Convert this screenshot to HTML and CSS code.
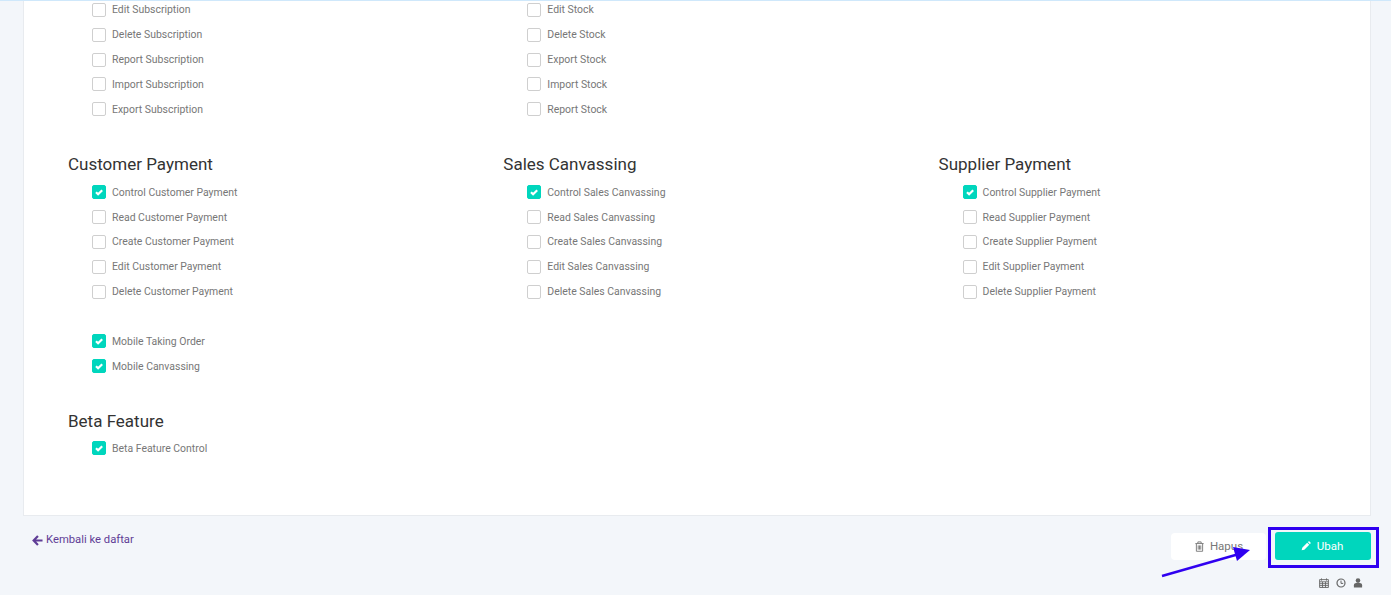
FILE: index.html
```html
<!DOCTYPE html>
<html lang="id">
<head>
<meta charset="utf-8">
<title>Ubah Peran</title>
<link rel="stylesheet" href="styles.css">
</head>
<body>
<div class="topline"></div>
<main class="card">
  <div class="grid first">
    <ul class="perms">
      <li class="perm"><span class="box"></span>Edit Subscription</li>
      <li class="perm"><span class="box"></span>Delete Subscription</li>
      <li class="perm"><span class="box"></span>Report Subscription</li>
      <li class="perm"><span class="box"></span>Import Subscription</li>
      <li class="perm"><span class="box"></span>Export Subscription</li>
    </ul>
    <ul class="perms">
      <li class="perm"><span class="box"></span>Edit Stock</li>
      <li class="perm"><span class="box"></span>Delete Stock</li>
      <li class="perm"><span class="box"></span>Export Stock</li>
      <li class="perm"><span class="box"></span>Import Stock</li>
      <li class="perm"><span class="box"></span>Report Stock</li>
    </ul>
  </div>
  <div class="grid second">
    <section>
      <h3 class="title">Customer Payment</h3>
      <ul class="perms">
        <li class="perm"><span class="box on"><svg viewBox="0 0 14 14"><path d="M4 7.200 6.100 9.200 10.200 5.200" /></svg></span>Control Customer Payment</li>
        <li class="perm"><span class="box"></span>Read Customer Payment</li>
        <li class="perm"><span class="box"></span>Create Customer Payment</li>
        <li class="perm"><span class="box"></span>Edit Customer Payment</li>
        <li class="perm"><span class="box"></span>Delete Customer Payment</li>
      </ul>
    </section>
    <section>
      <h3 class="title">Sales Canvassing</h3>
      <ul class="perms">
        <li class="perm"><span class="box on"><svg viewBox="0 0 14 14"><path d="M4 7.200 6.100 9.200 10.200 5.200" /></svg></span>Control Sales Canvassing</li>
        <li class="perm"><span class="box"></span>Read Sales Canvassing</li>
        <li class="perm"><span class="box"></span>Create Sales Canvassing</li>
        <li class="perm"><span class="box"></span>Edit Sales Canvassing</li>
        <li class="perm"><span class="box"></span>Delete Sales Canvassing</li>
      </ul>
    </section>
    <section>
      <h3 class="title">Supplier Payment</h3>
      <ul class="perms">
        <li class="perm"><span class="box on"><svg viewBox="0 0 14 14"><path d="M4 7.200 6.100 9.200 10.200 5.200" /></svg></span>Control Supplier Payment</li>
        <li class="perm"><span class="box"></span>Read Supplier Payment</li>
        <li class="perm"><span class="box"></span>Create Supplier Payment</li>
        <li class="perm"><span class="box"></span>Edit Supplier Payment</li>
        <li class="perm"><span class="box"></span>Delete Supplier Payment</li>
      </ul>
    </section>
  </div>
  <ul class="perms mobile">
    <li class="perm"><span class="box on"><svg viewBox="0 0 14 14"><path d="M4 7.200 6.100 9.200 10.200 5.200" /></svg></span>Mobile Taking Order</li>
    <li class="perm"><span class="box on"><svg viewBox="0 0 14 14"><path d="M4 7.200 6.100 9.200 10.200 5.200" /></svg></span>Mobile Canvassing</li>
  </ul>
  <section class="beta">
    <h3 class="title">Beta Feature</h3>
    <ul class="perms">
      <li class="perm"><span class="box on"><svg viewBox="0 0 14 14"><path d="M4 7.200 6.100 9.200 10.200 5.200" /></svg></span>Beta Feature Control</li>
    </ul>
  </section>
</main>
<footer class="footer">
  <a class="back" href="#"><svg class="ico" viewBox="0 0 12 12"><path d="M6.500 1.200 1.800 6 6.500 10.800M2 6h9.500" /></svg>Kembali ke daftar</a>
  <div class="side">
    <div class="actions">
      <button class="btn ghost"><svg class="ico trash" viewBox="0 0 12 12"><path d="M1.500 2.800h9M4.200 2.800V1h3.600v1.800M2.600 2.800v8.400h6.800V2.800M4.600 4.800v4.600M6 4.800v4.600M7.400 4.800v4.600" /></svg>Hapus</button>
      <div class="mark"><button class="btn primary"><svg class="pencil" viewBox="0 0 12 12"><path d="M.8 11.200 1.500 8 7.400 2.100 9.900 4.600 4 10.500ZM8.200 1.300 9 .6a.9.9 0 0 1 1.200 0l1.200 1.200a.9.9 0 0 1 0 1.200l-.7.8Z" /></svg>Ubah</button></div>
    </div>
    <div class="meta">
      <svg viewBox="0 0 10 10"><path d="M.6 1.600h8.800v7.900H.6ZM2.500.4v2.200M7.500.4v2.200M.6 3.800h8.800M.6 5.700h8.800M.6 7.600h8.800M3.500 3.800v5.700M6.500 3.800v5.700" fill="none" stroke="#666" stroke-width=".9" /></svg>
      <svg viewBox="0 0 10 10"><circle cx="5" cy="5" r="4" fill="none" stroke="#666" stroke-width="1.200" /><path d="M5 2.600V5.400H7.200" fill="none" stroke="#666" stroke-width="1" /></svg>
      <svg viewBox="0 0 10 10"><circle cx="5" cy="2.600" r="2.300" fill="#666" /><path d="M.9 9.600V7.200C.9 5.800 2 4.900 3.200 4.900h3.600c1.200 0 2.300.9 2.300 2.300v2.400Z" fill="#666" /></svg>
    </div>
  </div>
</footer>
<svg class="arrow" viewBox="0 0 100 40"><path d="M1 30 78 8" stroke="#2f00f0" stroke-width="2.500" fill="none" /><path d="M89 4 72 1 76 15Z" fill="#2f00f0" /></svg>
</body>
</html>
```
FILE: styles.css
```css
* { box-sizing: border-box; }
html, body { height: 100%; }
body {
  margin: 0;
  height: 595px;
  overflow: hidden;
  position: relative;
  background: #f3f6fa;
  font-family: Roboto, Inter, "Liberation Sans", sans-serif;
  color: #666;
}
.topline { height: 1px; background: #cfe8fb; }
.card {
  margin: 0 20px 0 23px;
  height: 515px;
  background: #fff;
  border: 1px solid #e8ebef;
  border-top: 0;
  padding: 0 44px;
  overflow: hidden;
}
.grid { display: grid; grid-template-columns: repeat(3, 435.3px); }
.first { margin-top: -3.500px; }
.second { margin-top: 28.1px; }
.perms { list-style: none; margin: 0; padding: 0 0 0 24px; }
.perm {
  display: flex;
  align-items: center;
  gap: 6px;
  height: 24.85px;
  font-size: 10.45px;
  color: #777;
  white-space: nowrap;
}
.box {
  width: 14px;
  height: 14px;
  flex: none;
  border: 1px solid #cfcfcf;
  border-radius: 2px;
  background: #fff;
}
.box svg { display: block; width: 14px; height: 14px; margin: -1px; fill: none; stroke: #fff; stroke-width: 2.200; }
.box.on { background: #00d6bd; border-color: #00d6bd; }
.title {
  margin: 0 0 2px;
  height: 28px;
  line-height: 28px;
  font-size: 17px;
  font-weight: 400;
  color: #333;
}
.mobile { margin-top: 25px; }
.beta { margin-top: 28px; }
.beta .title { margin-bottom: 1px; }
.footer { margin: 0 12px 0 32px; display: flex; justify-content: space-between; align-items: flex-start; }
.back {
  margin-top: 17px;
  display: flex;
  align-items: center;
  gap: 3px;
  font-size: 11.25px;
  line-height: 14px;
  color: #5f3d96;
  text-decoration: none;
}
.ico { width: 11px; height: 11px; fill: none; stroke: currentColor; stroke-width: 2.400; }
.side { display: flex; flex-direction: column; align-items: flex-end; }
.actions { display: flex; align-items: center; margin-top: 11px; }
.btn {
  display: flex;
  align-items: center;
  justify-content: center;
  height: 28px;
  border: 0;
  border-radius: 3px;
  font: inherit;
  font-size: 11.5px;
}
.ghost { width: 95px; height: 27px; background: #fff; color: #777; gap: 5px; margin-right: 2px; border-radius: 4px; margin-top: -3px; }
.ghost .trash { stroke-width: 1; }
.mark { border: 3px solid #2f00f0; padding: 2px 4px; width: 111px; height: 41px; }
.primary { width: 96px; background: #00d6bd; color: #fff; gap: 6px; padding-right: 8px; }
.pencil { width: 10px; height: 10px; fill: #fff; }
.meta { display: flex; gap: 7px; margin-top: 10px; margin-right: 16px; }
.meta svg { width: 10px; height: 10px; }
.arrow { position: absolute; left: 1161px; top: 546px; width: 100px; height: 40px; }
```
